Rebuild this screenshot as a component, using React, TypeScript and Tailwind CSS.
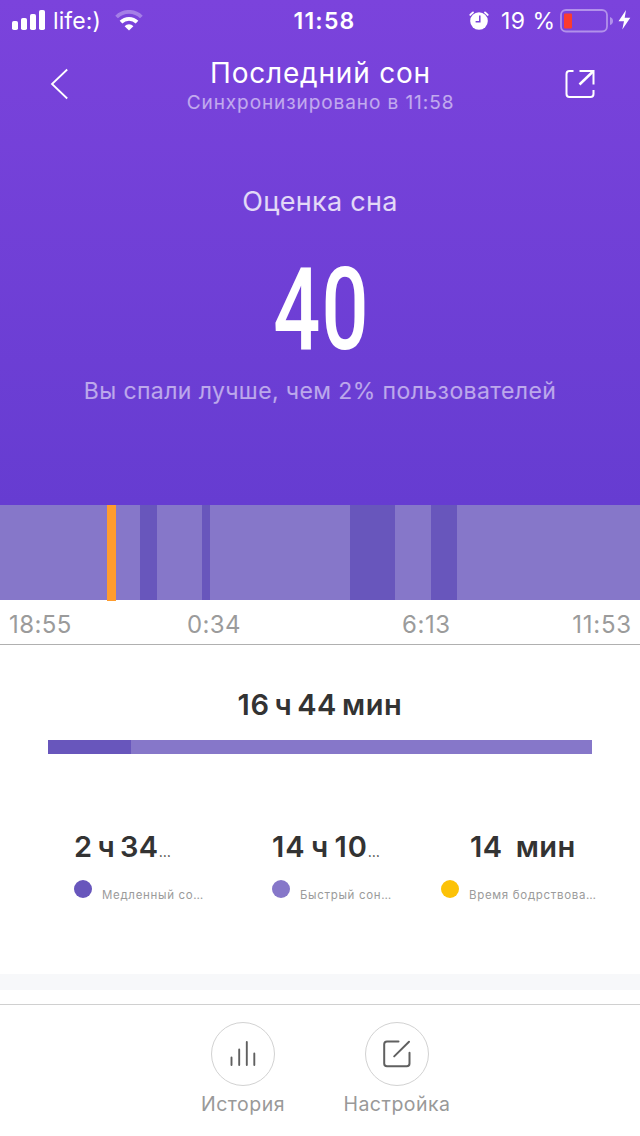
import type { ReactNode } from "react";

interface Segment {
  width: number;
  color: string;
}

// Night timeline, widths in px across the full screen
const timeline: Segment[] = [
  { width: 107, color: "bg-[#8677c9]" },
  { width: 9, color: "bg-[#ff9c2d] h-24" },
  { width: 24, color: "bg-[#8677c9]" },
  { width: 17, color: "bg-[#6856bc]" },
  { width: 45, color: "bg-[#8677c9]" },
  { width: 8, color: "bg-[#6856bc]" },
  { width: 140, color: "bg-[#8677c9]" },
  { width: 45, color: "bg-[#6856bc]" },
  { width: 36, color: "bg-[#8677c9]" },
  { width: 26, color: "bg-[#6856bc]" },
  { width: 183, color: "bg-[#8677c9]" },
];

function StatusBar() {
  return (
    <div className="grid h-10 grid-cols-3 items-center whitespace-nowrap">
      <div className="flex items-center pl-3">
        <svg width="34" height="20" viewBox="0 0 34 20" fill="currentColor">
          <rect x="0" y="11" width="6" height="9" rx="1.8" />
          <rect x="9" y="8" width="6" height="12" rx="1.8" />
          <rect x="18" y="4" width="6" height="16" rx="1.8" />
          <rect x="27" y="0" width="6" height="20" rx="1.8" />
        </svg>
        <span className="ml-[7px] w-[48px] pt-[2px] text-[23px] tracking-[0.1px]">life:)</span>
        <svg className="ml-[14px]" width="28" height="21" viewBox="0 0 28 21" fill="none" stroke="currentColor">
          <path d="M1.6 7 A17.5 17.5 0 0 1 26.4 7" strokeWidth="3.8" opacity="0.32" />
          <path d="M6 12.2 A11.3 11.3 0 0 1 22 12.2" strokeWidth="3.8" />
          <path d="M9.6 16.2 A6.2 6.2 0 0 1 18.4 16.2 L14 20.6 Z" fill="currentColor" stroke="none" />
        </svg>
      </div>
      <div className="pt-[2px] pl-[9px] text-center text-[23px] font-semibold tracking-[1.2px]">11:58</div>
      <div className="flex items-center justify-end pr-[9px]">
        <svg width="20" height="19" viewBox="0 0 20 19">
          <circle cx="10" cy="10" r="8.8" fill="#fff" />
          <path d="M0.8 4.6 A13 13 0 0 1 4.6 1 M15.4 1 A13 13 0 0 1 19.2 4.6" fill="none" stroke="#fff" strokeWidth="1.8" />
          <path d="M10.8 4.6 V10.8 H6.6" fill="none" stroke="#7842da" strokeWidth="1.5" />
        </svg>
        <span className="ml-[12px] w-[53px] pt-[2px] text-[23px] tracking-[0.5px]">19 %</span>
        <svg className="mt-px ml-[6px]" width="54" height="24" viewBox="0 0 54 24">
          <rect x="1" y="1" width="46" height="21.5" rx="5" fill="none" stroke="#fff" strokeOpacity="0.42" strokeWidth="1.8" />
          <rect x="4" y="4.5" width="8" height="15" rx="1" fill="#fb3b2f" />
          <path d="M50 8 Q53 9 53 12 Q53 15 50 16 Z" fill="#fff" fillOpacity="0.42" />
        </svg>
        <svg className="ml-[4px]" width="13" height="20" viewBox="0 0 13 20" fill="currentColor">
          <path d="M8 0 L0.5 11.2 H6 L4.3 19.5 L12.3 7.8 H6.7 Z" />
        </svg>
      </div>
    </div>
  );
}

function Header() {
  return (
    <div className="flex justify-between pt-[15px] pr-[45px] pl-[50px]">
      <svg className="mt-[13px]" width="19" height="32" viewBox="0 0 19 32" fill="none" stroke="currentColor" strokeWidth="1.8">
        <path d="M17.2 1.5 L2 16 L17.2 30.5" />
      </svg>
      <div className="flex flex-col items-center pt-px pl-[7px] whitespace-nowrap">
        <h1 className="h-[34px] text-[28px] leading-[34px] tracking-[0.8px]">Последний сон</h1>
        <p className="h-[26px] text-[19px] leading-[26px] tracking-[0.92px] text-white/55">
          Синхронизировано в 11:58
        </p>
      </div>
      <svg className="mt-[14px]" width="30" height="30" viewBox="0 0 30 30" fill="none" stroke="currentColor" strokeWidth="2">
        <path d="M8.5 2 H4.5 Q1.5 2 1.5 5 V25 Q1.5 28 4.5 28 H25.5 Q28.5 28 28.5 25 V21" />
        <path d="M14.5 2 H28.5 V15.5" />
        <path d="M28 2.5 L14.5 15.5" strokeWidth="2.5" />
      </svg>
    </div>
  );
}

interface StatProps {
  value: string;
  label: string;
  dot: string;
  clipped?: boolean;
  valueClass: string;
  className: string;
}

function Stat({ value, label, dot, clipped, valueClass, className }: StatProps) {
  return (
    <div className={`shrink-0 whitespace-nowrap ${className}`}>
      <div className={`h-9 text-[29px] leading-9 font-semibold whitespace-pre text-[#333] ${valueClass}`}>
        {value}
        {clipped && <span className="text-[14px] font-normal tracking-normal">…</span>}
      </div>
      <div className="mt-[15px] flex h-[18px]">
        <span className={`h-[18px] w-[18px] rounded-full ${dot}`} />
        <span className="mt-[6px] ml-[10px] text-[11.5px] leading-[18px] tracking-[0.68px] text-[#9b9b9b]">{label}</span>
      </div>
    </div>
  );
}

function FooterButton({ label, children }: { label: string; children: ReactNode }) {
  return (
    <button className="flex w-[154px] flex-col items-center">
      <span className="flex h-16 w-16 items-center justify-center rounded-full border border-[#d2d2d2]">
        {children}
      </span>
      <span className="mt-[5px] text-[19.5px] leading-[26px] tracking-[0.5px] text-[#999]">{label}</span>
    </button>
  );
}

export default function App() {
  return (
    <div className="flex h-[1136px] w-[640px] flex-col overflow-hidden bg-white font-['Inter',sans-serif]">
      <section className="flex h-[505px] flex-col bg-linear-to-b from-[#7b43dc] to-[#663cd1] text-white">
        <StatusBar />
        <Header />
        <div className="flex flex-col items-center whitespace-nowrap">
          <h2 className="mt-[68px] h-9 text-[27px] leading-9 tracking-[0.3px] text-white/80">Оценка сна</h2>
          <div className="mt-[30px] h-[120px] scale-x-[0.72] pl-[3px] font-['Roboto'] text-[115px] leading-[120px] font-medium tracking-[1.5px]">
            40
          </div>
          <p className="mt-[5px] h-8 text-[23px] leading-8 tracking-[0.4px] text-white/55">
            Вы спали лучше, чем 2% пользователей
          </p>
        </div>
      </section>

      <div className="flex h-[95px] w-full">
        {timeline.map((segment, idx) => (
          <div key={idx} className={`shrink-0 ${segment.color}`} style={{ width: segment.width }} />
        ))}
      </div>

      <div className="flex h-[45px] items-center border-b border-[#b0b0b0] pt-[5px] pr-[8px] pl-[9px] text-[24px] tracking-[0.4px] text-[#9b9b9b]">
        <span className="w-[178px]">18:55</span>
        <span className="w-[215px]">0:34</span>
        <span className="tracking-[0.6px]">6:13</span>
        <span className="ml-auto tracking-[0.8px]">11:53</span>
      </div>

      <section className="h-[329px]">
        <div className="mt-[42px] text-center text-[29px] leading-9 font-semibold tracking-[0.6px] [word-spacing:-3px] text-[#333]">
          16 ч 44 мин
        </div>
        <div className="mx-12 mt-[17px] flex h-[14px] bg-[#8677c9]">
          <div className="w-[83px] bg-[#6856bc]" />
        </div>
        <div className="mt-[75px] flex pl-[74px]">
          <Stat
            value="2 ч 34"
            label="Медленный со…"
            dot="bg-[#6856bc]"
            clipped
            className="w-[198px]"
            valueClass="tracking-[0.5px] [word-spacing:-3px]"
          />
          <Stat
            value="14 ч 10"
            label="Быстрый сон…"
            dot="bg-[#8677c9]"
            clipped
            className="w-[169px]"
            valueClass="tracking-[1px] [word-spacing:-3px]"
          />
          <Stat
            value="14  мин"
            label="Время бодрствова…"
            dot="bg-[#fcc207]"
            className="w-[165px]"
            valueClass="pl-[29px] tracking-[0.4px] [word-spacing:-1px]"
          />
        </div>
      </section>

      <div className="h-4 bg-[#f7f8fa]" />

      <footer className="mt-[14px] flex grow justify-center border-t border-[#d0d0d0] pt-[17px]">
        <FooterButton label="История">
          <svg width="28" height="28" viewBox="0 0 28 28" stroke="#606060" strokeWidth="1.9" strokeLinecap="round">
            <path d="M2.5 17.5 V25 M10.2 9.5 V25 M17.8 2 V25 M25.3 13.5 V25" />
          </svg>
        </FooterButton>
        <FooterButton label="Настройка">
          <svg width="28" height="28" viewBox="0 0 28 28" fill="none" stroke="#606060" strokeWidth="2" strokeLinecap="round">
            <path d="M15.5 1.5 H4 Q1.2 1.5 1.2 4.3 V23.5 Q1.2 26.3 4 26.3 H23.7 Q26.5 26.3 26.5 23.5 V12.8" />
            <path d="M26 1.8 L11.2 16.4" />
          </svg>
        </FooterButton>
      </footer>
    </div>
  );
}
